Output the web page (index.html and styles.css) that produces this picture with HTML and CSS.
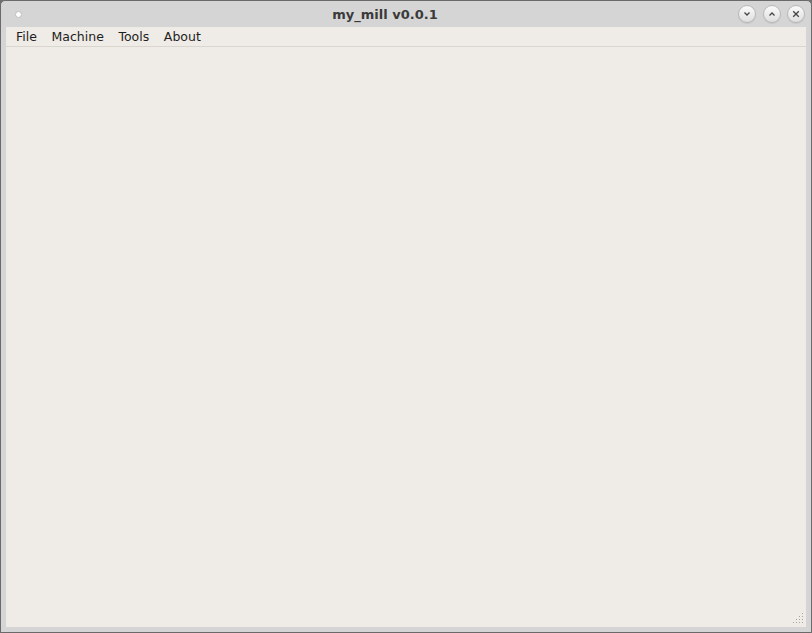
FILE: index.html
```html
<!DOCTYPE html>
<html lang="en">
<head>
    <meta charset="UTF-8">
    <title>my_mill v0.0.1</title>
    <link rel="stylesheet" href="styles.css">
</head>
<body>

<div class="window">
    <div class="titlebar">
        <div class="title-left">
            <span class="menu-dot"></span>
        </div>
        <div class="title">my_mill v0.0.1</div>
        <div class="title-buttons">
            <span class="wbtn">
                <svg width="8" height="8" viewBox="0 0 8 8"><path d="M1.5 2.5 L4 5 L6.5 2.5" fill="none" stroke="#444" stroke-width="1.3"/></svg>
            </span>
            <span class="wbtn">
                <svg width="8" height="8" viewBox="0 0 8 8"><path d="M1.5 5.5 L4 3 L6.5 5.5" fill="none" stroke="#444" stroke-width="1.3"/></svg>
            </span>
            <span class="wbtn">
                <svg width="8" height="8" viewBox="0 0 8 8"><path d="M1.2 1.2 L6.8 6.8 M6.8 1.2 L1.2 6.8" fill="none" stroke="#444" stroke-width="1.3"/></svg>
            </span>
        </div>
    </div>
    <div class="frame">
        <div class="menubar">
            <span class="menu-item">File</span>
            <span class="menu-item">Machine</span>
            <span class="menu-item">Tools</span>
            <span class="menu-item">About</span>
        </div>
        <div class="content">
            <svg class="grip" width="12" height="12" viewBox="0 0 12 12">
                <g fill="#a8a39d">
                    <rect x="9" y="0" width="1" height="1"/>
                    <rect x="6" y="3" width="1" height="1"/><rect x="9" y="3" width="1" height="1"/>
                    <rect x="3" y="6" width="1" height="1"/><rect x="6" y="6" width="1" height="1"/><rect x="9" y="6" width="1" height="1"/>
                    <rect x="0" y="9" width="1" height="1"/><rect x="3" y="9" width="1" height="1"/><rect x="6" y="9" width="1" height="1"/><rect x="9" y="9" width="1" height="1"/>
                </g>
            </svg>
        </div>
    </div>
</div>

</body>
</html>
```

FILE: styles.css
```css
html, body {
    margin: 0;
    padding: 0;
    height: 100%;
    background-color: #6f6f6f;
}
body {
    font-family: "DejaVu Sans", sans-serif;
}
.window {
    box-sizing: border-box;
    width: 812px;
    height: 633px;
    border: 1px solid #6a6a6a;
    border-radius: 5px 5px 0 0;
    background-color: #d5d5d5;
    display: flex;
    flex-direction: column;
    overflow: hidden;
}
.titlebar {
    height: 26px;
    display: flex;
    align-items: center;
    flex-shrink: 0;
}
.title-left {
    width: 31px;
    display: flex;
    align-items: center;
    padding-left: 14px;
    box-sizing: border-box;
}
.menu-dot {
    width: 7px;
    height: 7px;
    border-radius: 50%;
    background: #ffffff;
    border: 1px solid #bdbdbd;
    box-sizing: border-box;
}
.title {
    flex: 1;
    text-align: center;
    font-size: 13px;
    font-weight: bold;
    color: #3a3a3a;
    padding-top: 1px;
}
.title-buttons {
    width: 73px;
    display: flex;
    align-items: center;
    gap: 6.5px;
    box-sizing: border-box;
}
.wbtn {
    width: 18px;
    height: 18px;
    border-radius: 50%;
    box-sizing: border-box;
    border: 1px solid #b8b8b8;
    background: linear-gradient(#fbfbfb, #dedede);
    box-shadow: 0 1px 1px rgba(0, 0, 0, 0.08);
    display: flex;
    align-items: center;
    justify-content: center;
}
.frame {
    flex: 1;
    margin: 0 5px 5px 5px;
    background-color: #efebe6;
    display: flex;
    flex-direction: column;
}
.menubar {
    height: 19px;
    border-bottom: 1px solid #d9d5cf;
    display: flex;
    align-items: center;
    gap: 14.6px;
    padding-left: 10px;
    font-size: 12.5px;
    color: #1e1e1e;
}
.content {
    flex: 1;
    position: relative;
}
.grip {
    position: absolute;
    right: 1px;
    bottom: 2px;
}
```
